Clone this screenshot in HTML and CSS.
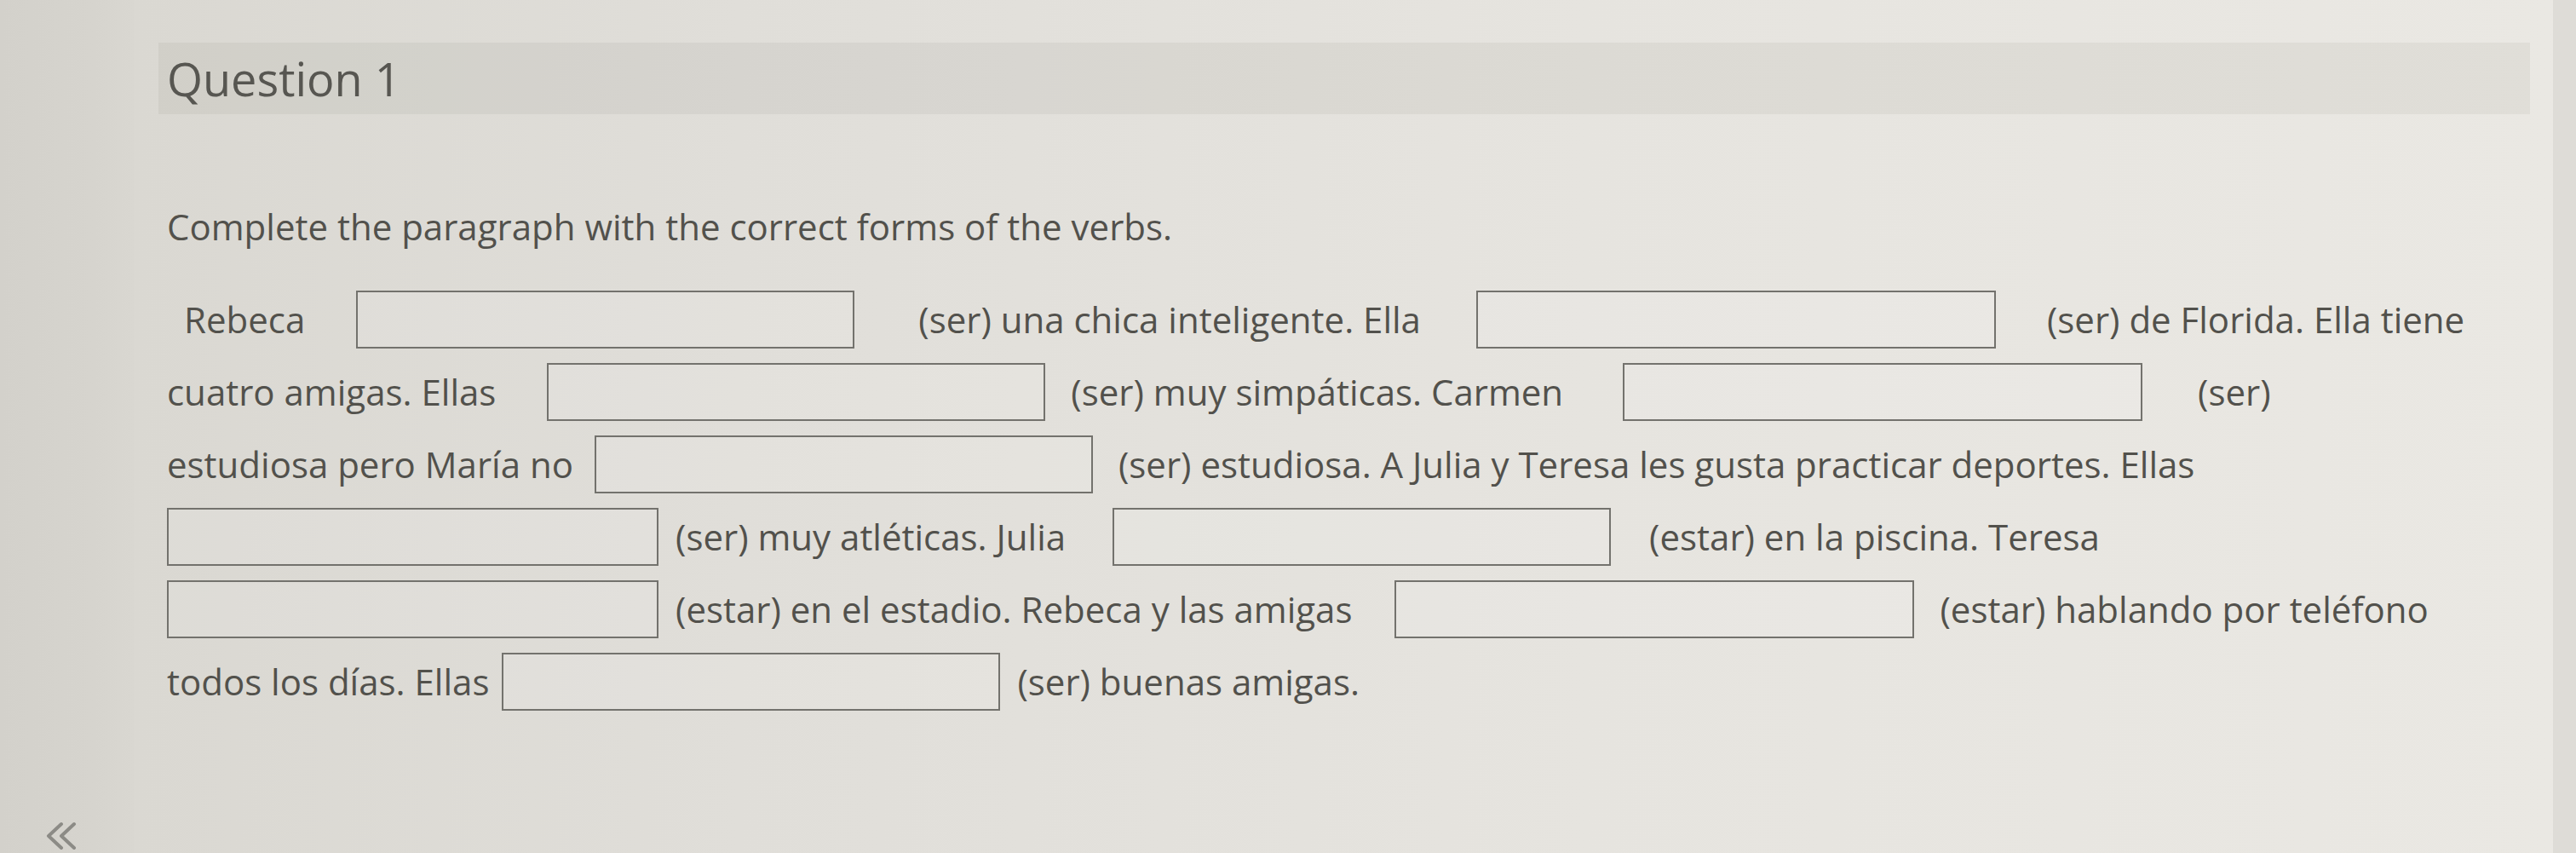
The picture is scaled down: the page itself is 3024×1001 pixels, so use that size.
FILE: index.html
```html
<!DOCTYPE html>
<html lang="es">
<head>
<meta charset="utf-8">
<title>Question 1</title>
<link rel="stylesheet" href="styles.css">
</head>
<body>
<div class="page">
  <aside class="sidebar">
    <button class="collapse" type="button" aria-label="Collapse">
      <svg viewBox="0 0 38 33" width="38" height="33" aria-hidden="true">
        <polyline points="20,3 5,17 20,31" />
        <polyline points="35,3 20,17 35,31" />
      </svg>
    </button>
  </aside>
  <main class="main">
    <section class="question">
      <header class="q-header">
        <h2 class="q-title">Question 1</h2>
      </header>
      <div class="q-body">
        <p class="instructions">Complete the paragraph with the correct forms of the verbs.</p>
        <div class="passage">
          <div class="line indent">
            <span class="seg">Rebeca</span>
            <input class="blank ml-60" type="text" aria-label="blank 1">
            <span class="seg ml-75">(ser) una chica inteligente. Ella</span>
            <input class="blank wide ml-65" type="text" aria-label="blank 2">
            <span class="seg ml-60">(ser) de Florida. Ella tiene</span>
          </div>
          <div class="line">
            <span class="seg">cuatro amigas. Ellas</span>
            <input class="blank ml-60" type="text" aria-label="blank 3">
            <span class="seg ml-30">(ser) muy simpáticas. Carmen</span>
            <input class="blank wide ml-70" type="text" aria-label="blank 4">
            <span class="seg ml-65">(ser)</span>
          </div>
          <div class="line">
            <span class="seg">estudiosa pero María no</span>
            <input class="blank ml-25" type="text" aria-label="blank 5">
            <span class="seg ml-30">(ser) estudiosa. A Julia y Teresa les gusta practicar deportes. Ellas</span>
          </div>
          <div class="line">
            <input class="blank narrow" type="text" aria-label="blank 6">
            <span class="seg ml-20">(ser) muy atléticas. Julia</span>
            <input class="blank ml-55" type="text" aria-label="blank 7">
            <span class="seg ml-45">(estar) en la piscina. Teresa</span>
          </div>
          <div class="line">
            <input class="blank narrow" type="text" aria-label="blank 8">
            <span class="seg ml-20">(estar) en el estadio. Rebeca y las amigas</span>
            <input class="blank wide ml-50" type="text" aria-label="blank 9">
            <span class="seg ml-30">(estar) hablando por teléfono</span>
          </div>
          <div class="line">
            <span class="seg">todos los días. Ellas</span>
            <input class="blank ml-15" type="text" aria-label="blank 10">
            <span class="seg ml-20">(ser) buenas amigas.</span>
          </div>
        </div>
      </div>
    </section>
  </main>
  <div class="rail"></div>
</div>
</body>
</html>
```

FILE: styles.css
```css
* {
  box-sizing: border-box;
}

html, body {
  margin: 0;
  padding: 0;
  height: 100%;
}

body {
  font-family: "Open Sans", "Noto Sans", "Liberation Sans", sans-serif;
  color: #52514c;
  background: #e3e1dc;
  overflow: hidden;
}

.page {
  display: flex;
  width: 3024px;
  height: 1001px;
}

.sidebar {
  width: 157px;
  flex: 0 0 157px;
  display: flex;
  flex-direction: column;
  justify-content: flex-end;
  align-items: flex-start;
  padding: 0 0 4px 52px;
  background: linear-gradient(90deg, #d3d1cb 0%, #d6d4ce 70%, #d9d7d1 100%);
}

.collapse {
  width: 38px;
  height: 33px;
  padding: 0;
  border: 0;
  background: none;
  display: block;
}

.collapse svg {
  display: block;
}

.collapse polyline {
  fill: none;
  stroke: #8c8b86;
  stroke-width: 4;
  stroke-linecap: round;
  stroke-linejoin: round;
}

.main {
  flex: 1 1 auto;
  padding: 50px 27px 0 29px;
  background: linear-gradient(90deg, #dad8d2 0%, #e0ded9 25%, #e6e4df 60%, #eae8e3 100%);
}

.rail {
  width: 27px;
  flex: 0 0 27px;
  background: #dedcd7;
}

.q-header {
  height: 84px;
  display: flex;
  align-items: center;
  padding-left: 10px;
  background: rgba(60, 55, 45, 0.055);
}

.q-title {
  margin: 0;
  font-size: 54px;
  font-weight: 400;
  line-height: 1;
  color: #575651;
}

.q-body {
  padding-left: 10px;
}

.instructions {
  margin: 103px 0 0 0;
  font-size: 42px;
  line-height: 58.8px;
}

.passage {
  margin-top: 37px;
  font-size: 42px;
}

.line {
  display: flex;
  align-items: center;
  height: 85px;
}

.line.indent {
  padding-left: 20px;
}

.seg {
  white-space: nowrap;
  line-height: 58.8px;
}

.blank {
  width: 585px;
  height: 68px;
  flex: 0 0 auto;
  margin: 0;
  padding: 0 12px;
  border: 2px solid #73726d;
  border-radius: 0;
  background: rgba(255, 255, 255, 0.1);
  font: inherit;
  color: inherit;
  outline: none;
  -webkit-appearance: none;
  appearance: none;
}

.blank.wide {
  width: 610px;
}

.blank.narrow {
  width: 577px;
}

.ml-15 { margin-left: 15px; }
.ml-20 { margin-left: 20px; }
.ml-25 { margin-left: 25px; }
.ml-30 { margin-left: 30px; }
.ml-45 { margin-left: 45px; }
.ml-50 { margin-left: 50px; }
.ml-55 { margin-left: 55px; }
.ml-60 { margin-left: 60px; }
.ml-65 { margin-left: 65px; }
.ml-70 { margin-left: 70px; }
.ml-75 { margin-left: 75px; }
```
